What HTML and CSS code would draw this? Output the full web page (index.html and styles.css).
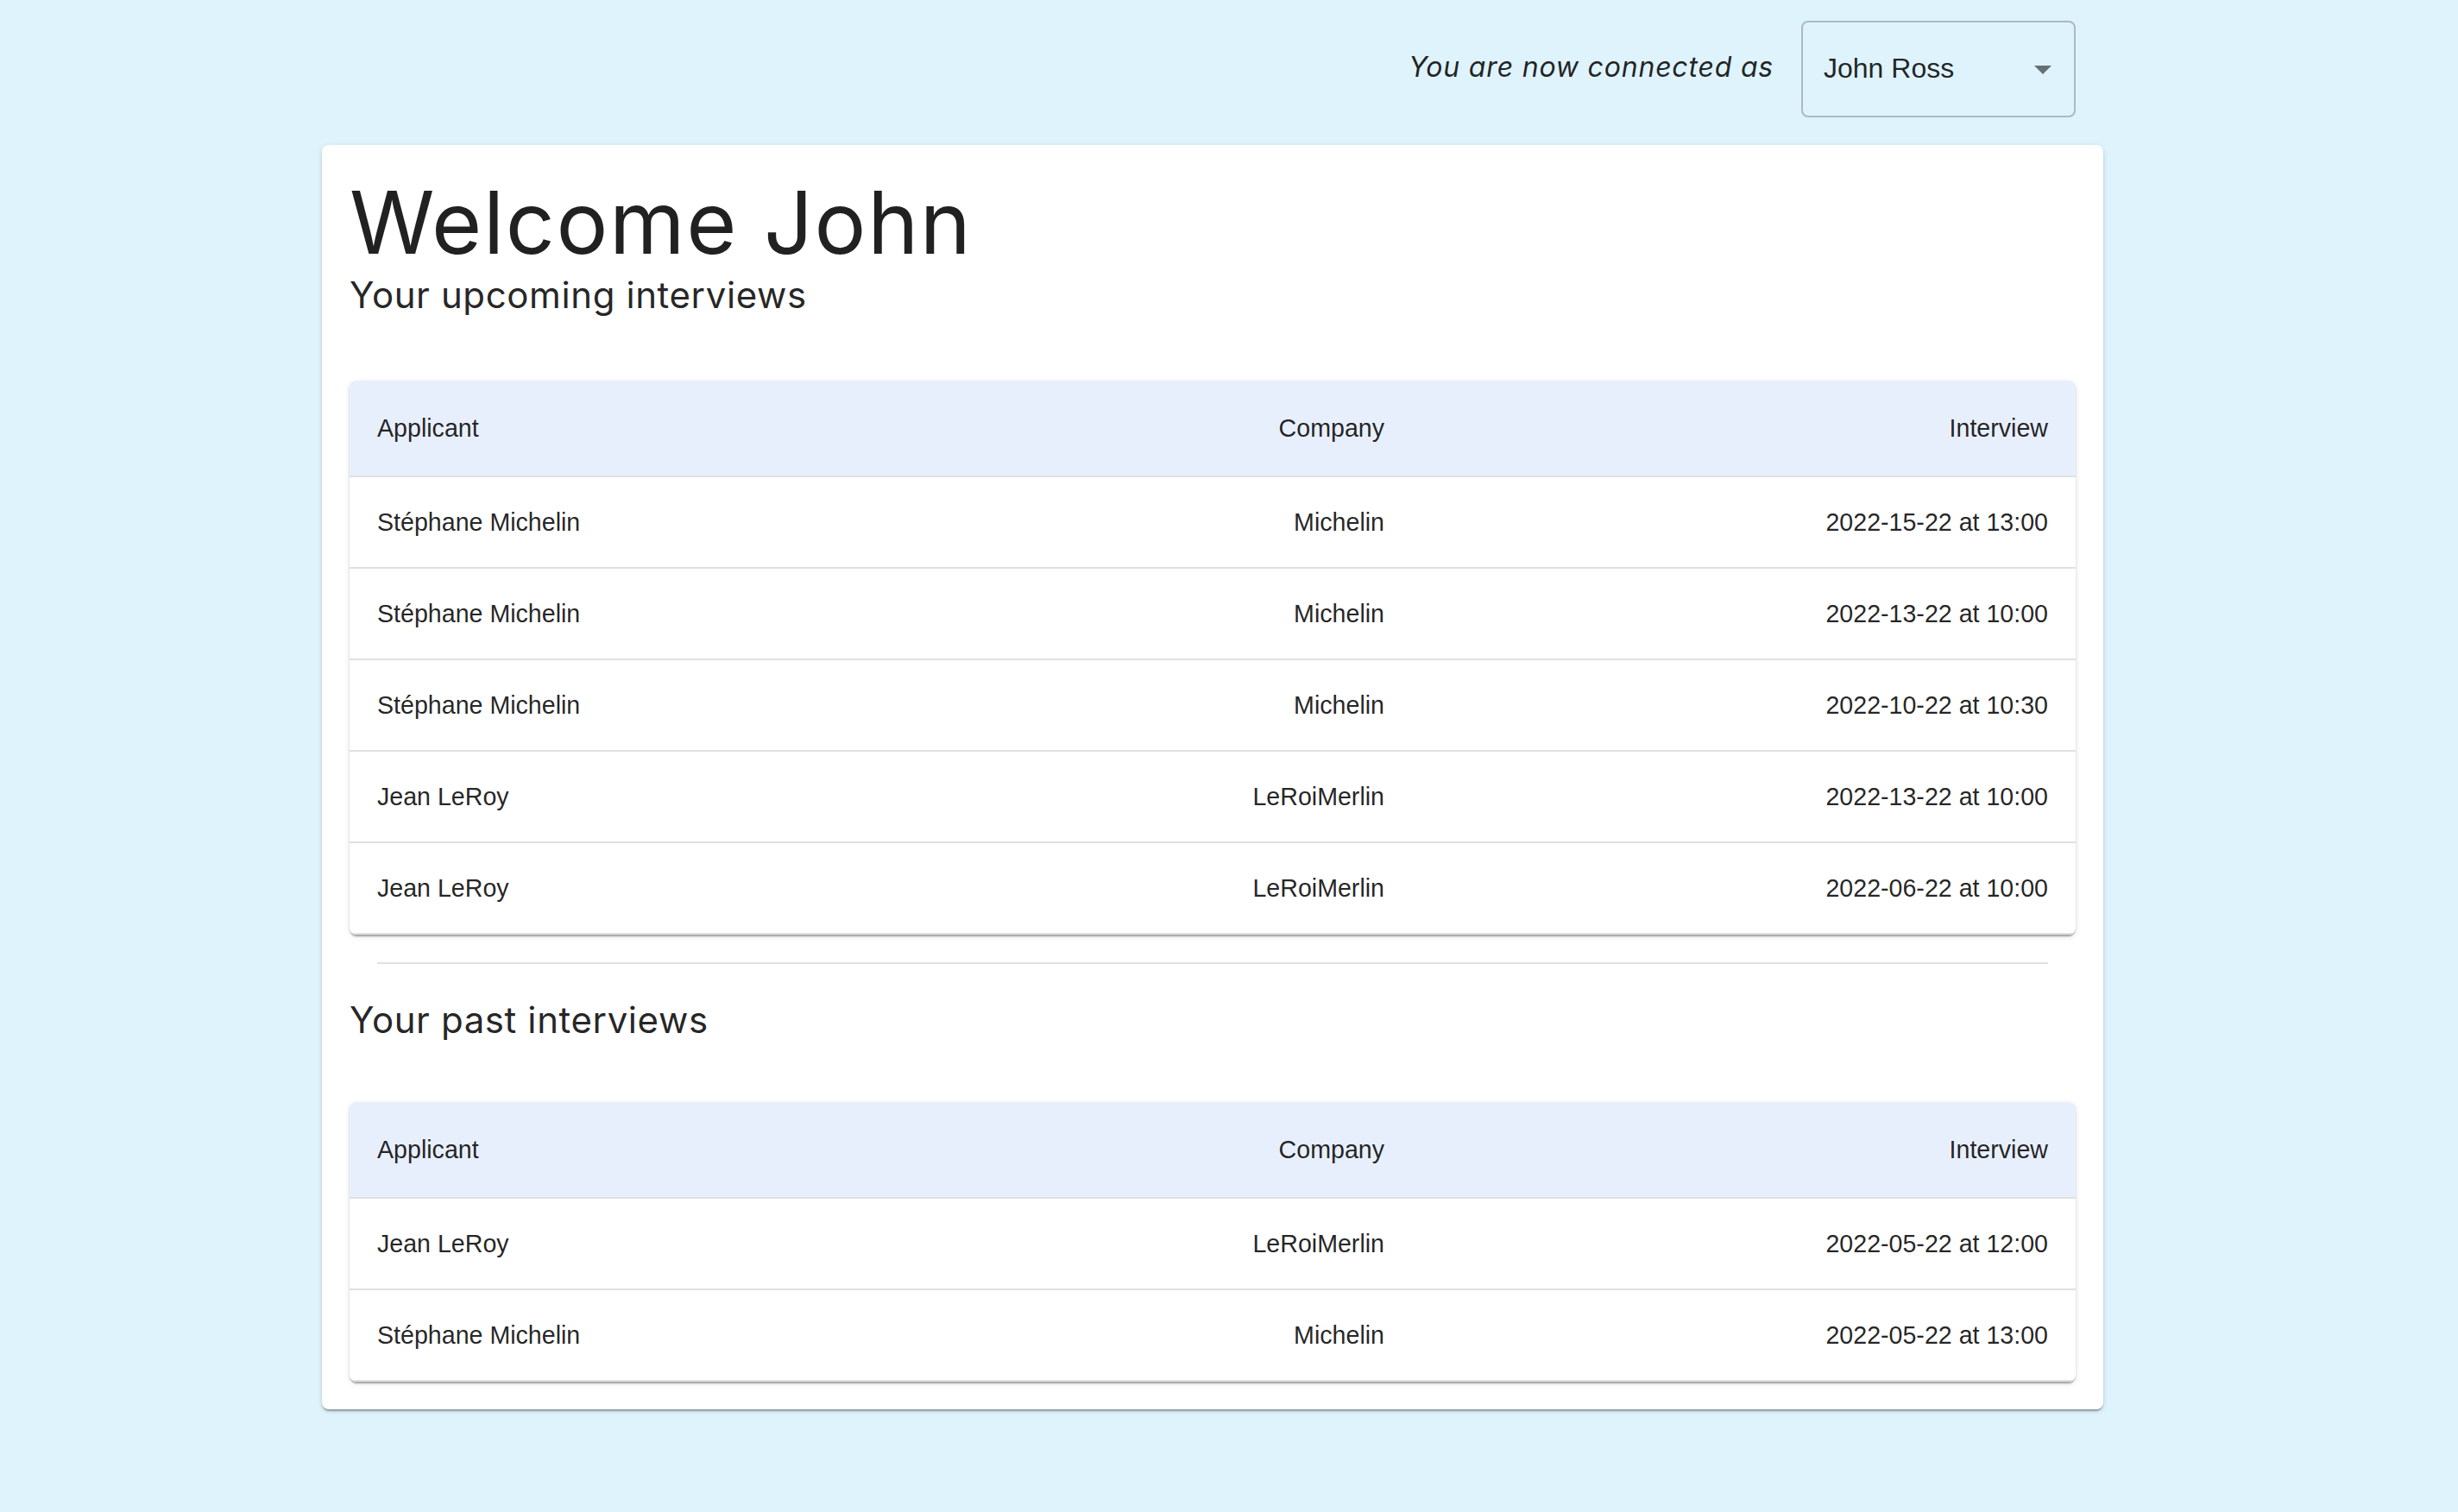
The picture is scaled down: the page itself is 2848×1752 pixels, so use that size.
FILE: index.html
```html
<!DOCTYPE html>
<html lang="en">
<head>
<meta charset="utf-8">
<title>Interviews</title>
<link rel="stylesheet" href="styles.css">
</head>
<body>
<div class="page">
  <header class="topbar">
    <span class="connected">You are now connected as</span>
    <div class="select">
      <span class="select-value">John Ross</span>
      <svg class="select-arrow" viewBox="7 10 10 5" width="20" height="10"><path d="M7 10l5 5 5-5z"/></svg>
    </div>
  </header>
  <main class="card">
    <h1 class="title">Welcome John</h1>
    <h2 class="subtitle">Your upcoming interviews</h2>
    <div class="paper">
      <table class="table">
        <colgroup><col class="col-a"><col class="col-b"><col class="col-c"></colgroup>
        <thead>
          <tr><th class="left">Applicant</th><th class="right">Company</th><th class="right">Interview</th></tr>
        </thead>
        <tbody>
          <tr><td class="left">Stéphane Michelin</td><td class="right">Michelin</td><td class="right">2022-15-22 at 13:00</td></tr>
          <tr><td class="left">Stéphane Michelin</td><td class="right">Michelin</td><td class="right">2022-13-22 at 10:00</td></tr>
          <tr><td class="left">Stéphane Michelin</td><td class="right">Michelin</td><td class="right">2022-10-22 at 10:30</td></tr>
          <tr><td class="left">Jean LeRoy</td><td class="right">LeRoiMerlin</td><td class="right">2022-13-22 at 10:00</td></tr>
          <tr><td class="left">Jean LeRoy</td><td class="right">LeRoiMerlin</td><td class="right">2022-06-22 at 10:00</td></tr>
        </tbody>
      </table>
    </div>
    <hr class="divider">
    <h2 class="subtitle past">Your past interviews</h2>
    <div class="paper">
      <table class="table">
        <colgroup><col class="col-a"><col class="col-b"><col class="col-c"></colgroup>
        <thead>
          <tr><th class="left">Applicant</th><th class="right">Company</th><th class="right">Interview</th></tr>
        </thead>
        <tbody>
          <tr><td class="left">Jean LeRoy</td><td class="right">LeRoiMerlin</td><td class="right">2022-05-22 at 12:00</td></tr>
          <tr><td class="left">Stéphane Michelin</td><td class="right">Michelin</td><td class="right">2022-05-22 at 13:00</td></tr>
        </tbody>
      </table>
    </div>
  </main>
</div>
</body>
</html>
```
FILE: styles.css
```css
html, body {
  margin: 0;
  padding: 0;
}
body {
  background: #dff3fc;
  color: rgba(0, 0, 0, 0.87);
  font-family: "Liberation Sans", Arial, sans-serif;
  min-height: 1752px;
}
.page {
  width: 2064px;
  margin-left: 373px;
}
.topbar {
  display: flex;
  justify-content: flex-end;
  align-items: center;
  padding: 24px 32px 32px;
  height: 112px;
}
.connected {
  font-family: Inter, "Open Sans", sans-serif;
  font-style: italic;
  font-size: 32px;
  letter-spacing: 0.8px;
  margin-right: 32px;
  margin-bottom: 6px;
  color: rgba(0, 0, 0, 0.87);
}
.select {
  box-sizing: border-box;
  width: 318px;
  height: 112px;
  border: 2px solid rgba(0, 0, 0, 0.23);
  border-radius: 8px;
  display: flex;
  align-items: center;
  justify-content: space-between;
  padding: 0 26px 0 24px;
}
.select-value {
  font-size: 32px;
  margin-bottom: 2px;
}
.select-arrow {
  fill: rgba(0, 0, 0, 0.54);
  margin-top: 2px;
}
.card {
  background: #fff;
  border-radius: 8px;
  padding: 32px;
  box-shadow: 0 4px 2px -2px rgba(0,0,0,0.2), 0 2px 2px 0 rgba(0,0,0,0.14), 0 2px 6px 0 rgba(0,0,0,0.12);
}
.title {
  font-family: Inter, "Open Sans", sans-serif;
  font-weight: 400;
  font-size: 100px;
  line-height: 115px;
  margin: 0;
  letter-spacing: 1.6px;
}
.subtitle {
  font-family: Inter, "Open Sans", sans-serif;
  font-weight: 400;
  font-size: 42px;
  line-height: 54px;
  letter-spacing: 0.6px;
  margin: 0 0 72px;
}
.subtitle.past {
  margin-top: 38px;
  margin-bottom: 68px;
}
.paper {
  background: #fff;
  border-radius: 8px;
  overflow: hidden;
  box-shadow: 0 4px 2px -2px rgba(0,0,0,0.2), 0 2px 2px 0 rgba(0,0,0,0.14), 0 2px 6px 0 rgba(0,0,0,0.12);
}
.table {
  width: 100%;
  border-collapse: collapse;
  table-layout: fixed;
  font-size: 28.6px;
}
.col-a { width: 800px; }
.col-b { width: 431px; }
.col-c { width: 769px; }
.table thead tr {
  background: #e8effc;
}
.table th, .table td {
  padding: 32px;
  border-bottom: 2px solid #e0e0e0;
  font-weight: 400;
  white-space: nowrap;
}
.table th {
  line-height: 46px;
}
.table td {
  line-height: 40px;
}
.left { text-align: left; }
.right { text-align: right; }
.divider {
  border: 0;
  height: 2px;
  background: #e0e0e0;
  margin: 32px 32px 0;
}
```
